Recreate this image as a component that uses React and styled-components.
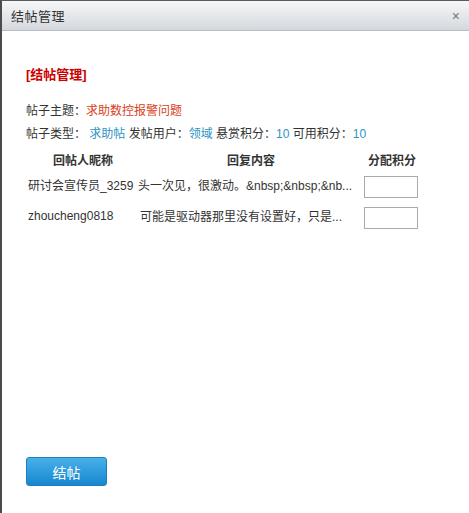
import React from 'react';
import styled, { createGlobalStyle } from 'styled-components';

const GlobalStyle = createGlobalStyle`
  html, body {
    margin: 0;
    padding: 0;
    background: #fff;
  }
  body {
    font-family: "Liberation Sans", Arial, "Noto Sans CJK SC", sans-serif;
    font-size: 12px;
    color: #333;
  }
`;

const rows = [
  { name: '研讨会宣传员_3259', content: '头一次见，很激动。&nbsp;&nbsp;&nb...', indent: 0 },
  { name: 'zhoucheng0818', content: '可能是驱动器那里没有设置好，只是...', indent: 2 },
];

const App = () => {
  return (
    <Dialog>
      <GlobalStyle />
      <Header>
        <Title>结帖管理</Title>
        <Close>×</Close>
      </Header>
      <Body>
        <Heading>[结帖管理]</Heading>
        <Info>
          <Line>
            帖子主题：<Subject>求助数控报警问题</Subject>
          </Line>
          <Line>
            帖子类型：<Link> 求助帖</Link> 发帖用户：<Link>领域</Link> 悬赏积分：<Link>10</Link> 可用积分：<Link>10</Link>
          </Line>
        </Info>
        <Table>
          <colgroup>
            <col style={{ width: 110 }} />
            <col style={{ width: 226 }} />
            <col style={{ width: 56 }} />
          </colgroup>
          <thead>
            <tr>
              <Th>回帖人昵称</Th>
              <Th>回复内容</Th>
              <Th>分配积分</Th>
            </tr>
          </thead>
          <tbody>
            {rows.map((r) => (
              <tr key={r.name}>
                <Td>{r.name}</Td>
                <Td $indent={r.indent}>{r.content}</Td>
                <Td>
                  <ScoreInput type="text" />
                </Td>
              </tr>
            ))}
          </tbody>
        </Table>
        <Spacer />
        <SubmitButton>结帖</SubmitButton>
      </Body>
    </Dialog>
  );
};

const Dialog = styled.div`
  width: 469px;
  height: 513px;
  box-sizing: border-box;
  border-left: 2px solid #4b4b4b;
  border-top: 1px solid #5a5a5a;
  display: flex;
  flex-direction: column;
  background: #fff;
`;

const Header = styled.div`
  height: 29px;
  flex: none;
  display: flex;
  align-items: center;
  justify-content: space-between;
  padding: 0 9px 0 9px;
  background: linear-gradient(#f6f7f9, #d4d8dd);
  border-bottom: 1px solid #b9bec4;
`;

const Title = styled.span`
  font-size: 13px;
  color: #333;
  letter-spacing: 0.5px;
`;

const Close = styled.span`
  font-size: 14px;
  color: #777;
  line-height: 1;
`;

const Body = styled.div`
  flex: 1;
  display: flex;
  flex-direction: column;
  padding: 36px 0 27px 24px;
`;

const Heading = styled.div`
  color: #c00;
  font-weight: bold;
  font-size: 13px;
  line-height: 16px;
`;

const Info = styled.div`
  margin-top: 20px;
  display: flex;
  flex-direction: column;
  gap: 6px;
`;

const Line = styled.div`
  line-height: 17px;
  color: #333;
`;

const Subject = styled.span`
  color: #d8401c;
`;

const Link = styled.span`
  color: #2e93c4;
`;

const Table = styled.table`
  margin-top: 6px;
  margin-left: 2px;
  width: 392px;
  border-collapse: collapse;
  table-layout: fixed;
`;

const Th = styled.th`
  font-weight: bold;
  font-size: 12px;
  color: #333;
  padding: 0;
  height: 20px;
  text-align: center;
`;

const Td = styled.td`
  padding: 0 0 0 ${(p) => p.$indent || 0}px;
  height: 31px;
  white-space: nowrap;
  overflow: hidden;
  color: #333;
  vertical-align: middle;
`;

const ScoreInput = styled.input`
  width: 54px;
  height: 22px;
  box-sizing: border-box;
  border: 1px solid #aaa;
  padding: 0;
  margin: 4px 0 0;
  display: block;
`;

const Spacer = styled.div`
  flex: 1;
`;

const SubmitButton = styled.button`
  width: 81px;
  height: 29px;
  border: 1px solid #1d7fbd;
  border-radius: 3px;
  background: linear-gradient(#48b0ea, #1787cf);
  color: #fff;
  font-size: 14px;
  font-family: "Liberation Sans", Arial, "Noto Sans CJK SC", sans-serif;
  padding: 0;
  cursor: pointer;
`;

export default App;
